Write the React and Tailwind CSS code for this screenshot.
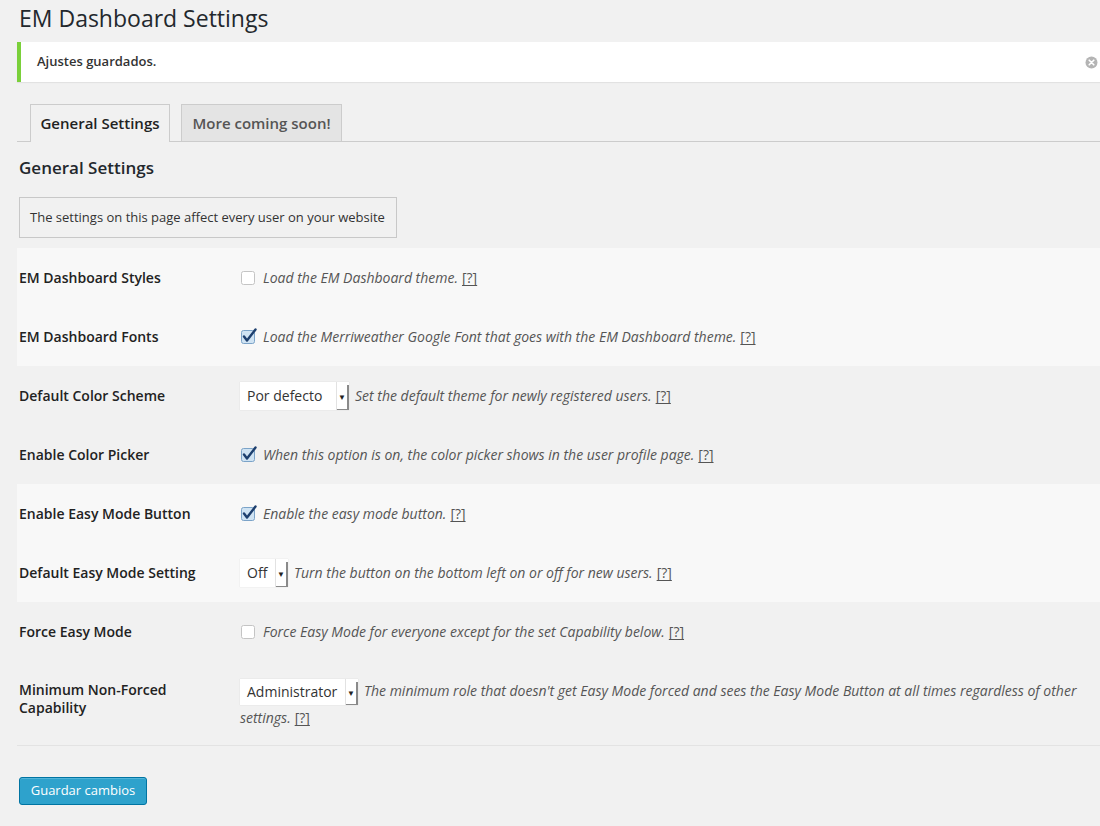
import React from 'react';

const rows = [
  { label: 'EM Dashboard Styles', type: 'check', checked: false, desc: 'Load the EM Dashboard theme.', band: true },
  { label: 'EM Dashboard Fonts', type: 'check', checked: true, desc: 'Load the Merriweather Google Font that goes with the EM Dashboard theme.', band: true },
  { label: 'Default Color Scheme', type: 'select', value: 'Por defecto', width: 'w-[109px]', desc: 'Set the default theme for newly registered users.', band: false },
  { label: 'Enable Color Picker', type: 'check', checked: true, desc: 'When this option is on, the color picker shows in the user profile page.', band: false },
  { label: 'Enable Easy Mode Button', type: 'check', checked: true, desc: 'Enable the easy mode button.', band: true },
  { label: 'Default Easy Mode Setting', type: 'select', value: 'Off', width: 'w-[48px]', desc: 'Turn the button on the bottom left on or off for new users.', band: true },
  { label: 'Force Easy Mode', type: 'check', checked: false, desc: 'Force Easy Mode for everyone except for the set Capability below.', band: false },
];

function Checkbox({ checked }) {
  return (
    <svg width="18" height="18" viewBox="0 0 18 18" className="shrink-0">
      <rect x="1.5" y="2.5" width="13" height="13" rx="2" fill={checked ? '#cfe3f3' : '#fff'} stroke={checked ? '#7ba3c8' : '#c4c4c4'} />
      {checked && (
        <path d="M4 8.5 L7 12.5 L15.5 1.5" fill="none" stroke="#1d3f6e" strokeWidth="2.4" strokeLinecap="round" strokeLinejoin="round" />
      )}
    </svg>
  );
}

function Select({ value, width, height = 'h-[28px]' }) {
  return (
    <span className={`inline-flex ${width} ${height} shrink-0 items-stretch bg-white align-middle not-italic shadow-[0_0_1px_rgba(0,0,0,0.15)]`}>
      <span className="flex flex-1 items-center pl-[7px] text-[14px] text-[#333]">{value}</span>
      <span className="flex w-[13px] items-center justify-center border-l border-[#e2e2e2] text-[8px] text-[#222]">
        <span className="mt-[3px] flex h-[calc(100%-3px)] w-full items-center justify-center border-r-2 border-b border-[#8a8a8a]">▼</span>
      </span>
    </span>
  );
}

function Help() {
  return <span className="ml-[4px] not-italic underline underline-offset-2 text-[#555]">[?]</span>;
}

export default function App() {
  return (
    <div className="min-h-[826px] bg-[#f1f1f1] pl-[17px] text-[#444]" style={{ fontFamily: '"Open Sans", "Noto Sans", sans-serif' }}>
      {/* Title */}
      <h1 className="pl-[2px] pt-[4px] text-[23px] leading-[29px] text-[#23282d]">EM Dashboard Settings</h1>

      {/* Notice */}
      <div className="relative mt-[9px] flex h-[40px] items-center border-l-4 border-[#7ad03a] bg-white pl-[16px] shadow-[0_1px_1px_rgba(0,0,0,0.06)]">
        <p className="text-[13px] font-semibold text-[#333]">Ajustes guardados.</p>
        <svg width="13" height="13" viewBox="0 0 13 13" className="absolute right-[2px] top-[14px]">
          <circle cx="6.5" cy="6.5" r="6" fill="#b4b4b4" />
          <path d="M4.2 4.2 L8.8 8.8 M8.8 4.2 L4.2 8.8" stroke="#fff" strokeWidth="1.6" strokeLinecap="round" />
        </svg>
      </div>

      {/* Tabs */}
      <div className="mt-[22px] flex border-b border-[#ccc] pl-[13px]">
        <div className="-mb-px flex h-[38px] w-[140px] items-center justify-center border border-b-0 border-[#ccc] bg-[#f1f1f1] text-[15px] font-semibold text-[#222]">
          General Settings
        </div>
        <div className="ml-[11px] flex h-[37px] w-[161px] items-center justify-center border border-b-0 border-[#ccc] bg-[#e4e4e4] text-[15px] font-semibold text-[#555]">
          More coming soon!
        </div>
      </div>

      {/* Section */}
      <h3 className="mt-[15px] pl-[2px] text-[17px] font-semibold leading-[22px] text-[#23282d]">General Settings</h3>

      <div className="ml-[2px] mt-[18px] flex h-[41px] w-[378px] items-center border border-[#c8c8c8] px-[10px] text-[13px] text-[#333]">
        The settings on this page affect every user on your website
      </div>

      {/* Form table */}
      <div className="mt-[10px]">
        {rows.map((r) => (
          <div key={r.label} className={`flex h-[59px] items-center ${r.band ? 'bg-[#f8f8f8]' : ''}`}>
            <div className="w-[223px] shrink-0 pl-[2px] text-[14px] font-semibold text-[#222]">{r.label}</div>
            <div className="flex flex-1 items-center text-[14px] italic text-[#555]">
              {r.type === 'check' ? (
                <>
                  <Checkbox checked={r.checked} />
                  <span className="ml-[5px]">{r.desc}</span>
                </>
              ) : (
                <>
                  <Select value={r.value} width={r.width} />
                  <span className="ml-[6px]">{r.desc}</span>
                </>
              )}
              <Help />
            </div>
          </div>
        ))}

        {/* Last row wraps */}
        <div className="flex h-[84px] items-start">
          <div className="w-[223px] shrink-0 pl-[2px] pr-[20px] pt-[20px] text-[14px] font-semibold leading-[18px] text-[#222]">
            Minimum Non-Forced Capability
          </div>
          <div className="flex-1 pr-[18px] pt-[17px] text-[14px] italic leading-[26px] text-[#555]">
            <Select value="Administrator" width="w-[118px] mr-[6px]" height="h-[26px]" />
            The minimum role that doesn't get Easy Mode forced and sees the Easy Mode Button at all times regardless of other settings.
            <Help />
          </div>
        </div>
      </div>

      <div className="border-t border-[#e3e3e3]" />

      <button className="mt-[31px] ml-[2px] h-[28px] w-[128px] rounded-[3px] border border-[#0074a2] bg-[#2ea2cc] text-[13px] text-white shadow-[inset_0_1px_0_rgba(120,200,230,0.5)]">
        Guardar cambios
      </button>
    </div>
  );
}
